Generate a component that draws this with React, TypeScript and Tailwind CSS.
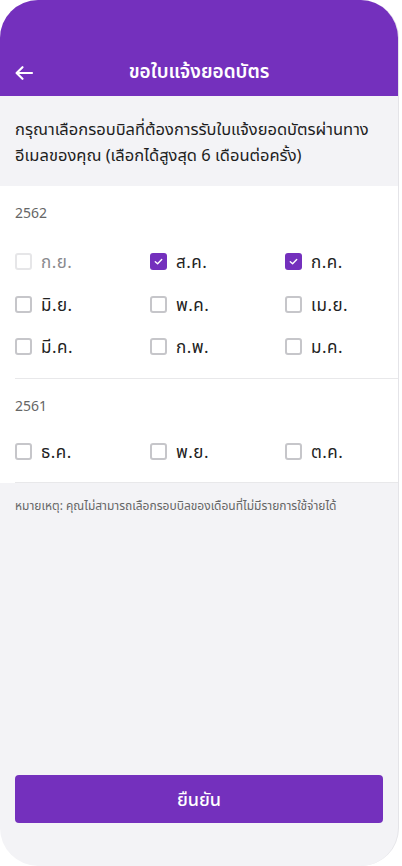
import React from "react";

const font = { fontFamily: '"Noto Sans", "Noto Sans Thai", Roboto, sans-serif' };

type M = { label: string; checked?: boolean; disabled?: boolean };

function Check({ m }: { m: M }) {
  return (
    <div className="flex items-center gap-[9px]">
      {m.checked ? (
        <div className="w-[17px] h-[17px] rounded-[3px] bg-[#7430bd] flex items-center justify-center">
          <svg width="11" height="11" viewBox="0 0 12 12" fill="none">
            <path d="M2.5 6.2 L5 8.5 L9.5 3.8" stroke="white" strokeWidth="1.5" strokeLinecap="round" strokeLinejoin="round" />
          </svg>
        </div>
      ) : (
        <div
          className={
            m.disabled
              ? "w-[17px] h-[17px] rounded-[3px] border-2 border-[#e6e6e8] bg-white"
              : "w-[17px] h-[17px] rounded-[3px] border-2 border-[#c6c6ca] bg-white"
          }
        />
      )}
      <span
        className={
          m.disabled
            ? "text-[17px] tracking-[0.5px] text-[#8a8a8e] leading-none"
            : "text-[17px] tracking-[0.5px] text-[#222] leading-none"
        }
      >
        {m.label}
      </span>
    </div>
  );
}

function Grid({ items }: { items: M[] }) {
  return (
    <div className="grid grid-cols-[135px_135px_1fr] gap-y-[25.5px]">
      {items.map((m) => (
        <Check key={m.label} m={m} />
      ))}
    </div>
  );
}

export default function App() {
  return (
    <div className="w-[402px] h-[866px] bg-white" style={font}>
      <div className="w-[399px] h-[866px] rounded-[38px] overflow-hidden bg-[#f3f3f6] flex flex-col border-r border-[#e4e4e8]">
        <div className="h-[96px] bg-[#7430bd] relative flex items-end pb-[13px]">
          <div className="absolute left-[14px] bottom-[15px]">
            <svg width="20" height="16" viewBox="0 0 20 16" fill="none">
              <path d="M18 8 H3 M8.5 2.2 L2.6 8 L8.5 13.8" stroke="white" strokeWidth="2.2" strokeLinecap="round" strokeLinejoin="round" />
            </svg>
          </div>
          <div className="w-full text-center text-white text-[19px] font-semibold leading-[24px]">ขอใบแจ้งยอดบัตร</div>
        </div>
        <div className="px-[15px] pt-[20px] pb-[18px] text-[16.5px] leading-[26px] text-[#1e1e1e]">
          กรุณาเลือกรอบบิลที่ต้องการรับใบแจ้งยอดบัตรผ่านทาง อีเมลของคุณ (เลือกได้สูงสุด 6 เดือนต่อครั้ง)
        </div>
        <div className="bg-white">
          <div className="pl-[15px]">
            <div className="pt-[18px] text-[14px] leading-[18px] text-[#666]">2562</div>
            <div className="pt-[31px] pb-[23px]">
              <Grid
                items={[
                  { label: "ก.ย.", disabled: true },
                  { label: "ส.ค.", checked: true },
                  { label: "ก.ค.", checked: true },
                  { label: "มิ.ย." },
                  { label: "พ.ค." },
                  { label: "เม.ย." },
                  { label: "มี.ค." },
                  { label: "ก.พ." },
                  { label: "ม.ค." },
                ]}
              />
            </div>
            <div className="border-t border-[#e8e8ea]" />
            <div className="pt-[18px] text-[14px] leading-[18px] text-[#666]">2561</div>
            <div className="pt-[28px] pb-[22px]">
              <Grid items={[{ label: "ธ.ค." }, { label: "พ.ย." }, { label: "ต.ค." }]} />
            </div>
            <div className="border-t border-[#e8e8ea]" />
          </div>
        </div>
        <div className="px-[15px] pt-[15px] text-[12px] leading-[16px] text-[#666]">
          หมายเหตุ: คุณไม่สามารถเลือกรอบบิลของเดือนที่ไม่มีรายการใช้จ่ายได้
        </div>
        <div className="flex-1" />
        <div className="px-[15px] pb-[43px]">
          <div className="h-[48px] rounded-[4px] bg-[#7430bd] flex items-center justify-center text-white text-[18px] font-medium">
            ยืนยัน
          </div>
        </div>
      </div>
    </div>
  );
}
